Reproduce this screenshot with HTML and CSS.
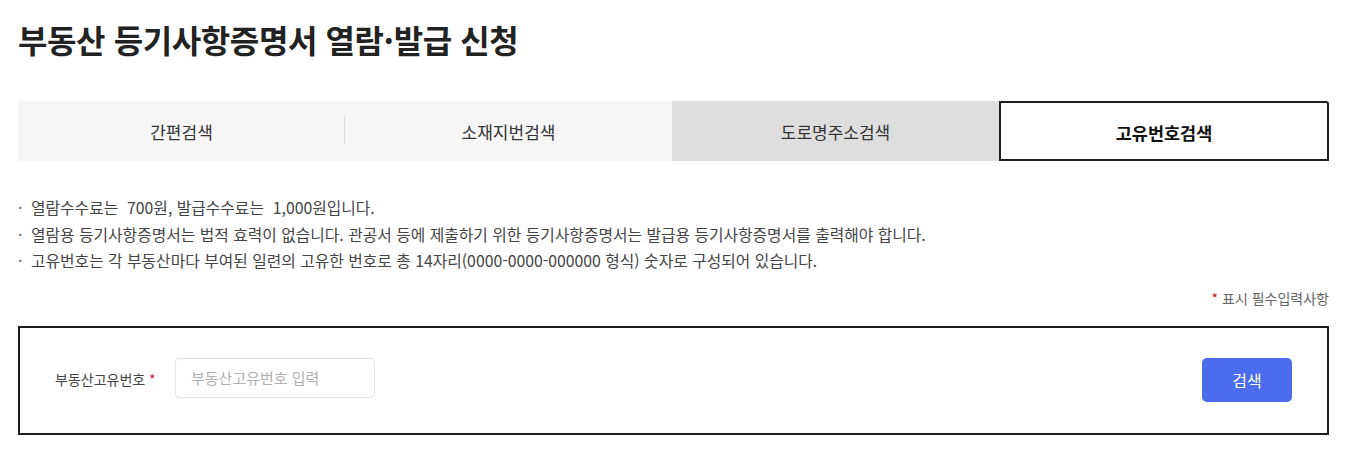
FILE: index.html
```html
<!DOCTYPE html>
<html lang="ko">
<head>
<meta charset="utf-8">
<title>부동산 등기사항증명서 열람·발급 신청</title>
<link rel="stylesheet" href="styles.css">
</head>
<body>
<div class="page">
  <h1 class="title">부동산 등기사항증명서 열람·발급 신청</h1>
  <div class="tabs">
    <div class="tab tab-light">간편검색</div>
    <div class="tab tab-light tab-divided">소재지번검색</div>
    <div class="tab tab-gray">도로명주소검색</div>
    <div class="tab tab-active">고유번호검색</div>
  </div>
  <ul class="notes">
    <li>열람수수료는&nbsp; 700원, 발급수수료는&nbsp; 1,000원입니다.</li>
    <li>열람용 등기사항증명서는 법적 효력이 없습니다. 관공서 등에 제출하기 위한 등기사항증명서는 발급용 등기사항증명서를 출력해야 합니다.</li>
    <li>고유번호는 각 부동산마다 부여된 일련의 고유한 번호로 총 14자리(0000-0000-000000 형식) 숫자로 구성되어 있습니다.</li>
  </ul>
  <p class="required-note"><span class="star">*</span> 표시 필수입력사항</p>
  <div class="form-box">
    <label class="field-label" for="uid">부동산고유번호 <span class="star">*</span></label>
    <input class="field-input" id="uid" type="text" placeholder="부동산고유번호 입력">
    <button class="search-btn" type="button">검색</button>
  </div>
</div>
</body>
</html>
```

FILE: styles.css
```css
* { box-sizing: border-box; }
html, body { margin: 0; padding: 0; background: #fff; }
body {
  font-family: "Noto Sans CJK KR", "Noto Sans", sans-serif;
  color: #333;
}
.page {
  padding: 0 30px 0 18px;
}
.title {
  margin: 0;
  padding-top: 17px;
  font-size: 32px;
  line-height: 44px;
  font-weight: 700;
  color: #222;
  letter-spacing: -0.4px;
}
.tabs {
  display: grid;
  grid-template-columns: 327px 327px 327px 1fr;
  margin-top: 40px;
  height: 60px;
}
.tab {
  display: flex;
  align-items: center;
  justify-content: center;
  font-size: 17px;
  color: #333;
  position: relative;
}
.tab-light { background: #f6f6f6; }
.tab-divided::before {
  content: "";
  position: absolute;
  left: -1px;
  top: 15px;
  height: 28px;
  width: 1px;
  background: #dcdcdc;
}
.tab-gray { background: #dedede; }
.tab-active {
  background: #fff;
  border: 2px solid #1e1e1e;
  border-radius: 0 3px 0 0;
  font-weight: 700;
  font-size: 17.5px;
  color: #111;
  padding-top: 2px;
}
.notes {
  list-style: none;
  margin: 0;
  padding: 34px 0 0 0;
}
.notes li {
  position: relative;
  padding-left: 13px;
  font-size: 15.8px;
  line-height: 26.5px;
  color: #444;
}
.notes li::before {
  content: "·";
  position: absolute;
  left: 0;
  top: 0;
  color: #666;
}
.required-note {
  margin: 14px 0 0 0;
  text-align: right;
  font-size: 14px;
  line-height: 18px;
  color: #666;
}
.star { color: #b8252b; }
.form-box {
  margin-top: 19px;
  border: 2px solid #1e1e1e;
  height: 109px;
  display: flex;
  align-items: center;
  padding: 0 35px 0 35px;
}
.field-label {
  font-size: 14px;
  line-height: 20px;
  color: #444;
  width: 120px;
  flex: none;
  margin-top: -2px;
}
.field-input {
  width: 200px;
  height: 40px;
  border: 1px solid #e4e4e4;
  border-radius: 4px;
  padding: 0 15px;
  font-family: inherit;
  font-size: 15px;
  color: #333;
  margin-top: -5px;
}
.field-input::placeholder { color: #b0b0b0; }
.search-btn {
  margin-left: auto;
  width: 90px;
  height: 44px;
  border: 0;
  border-radius: 5px;
  background: #4a6ced;
  color: #fff;
  font-family: inherit;
  font-size: 16px;
}
```
